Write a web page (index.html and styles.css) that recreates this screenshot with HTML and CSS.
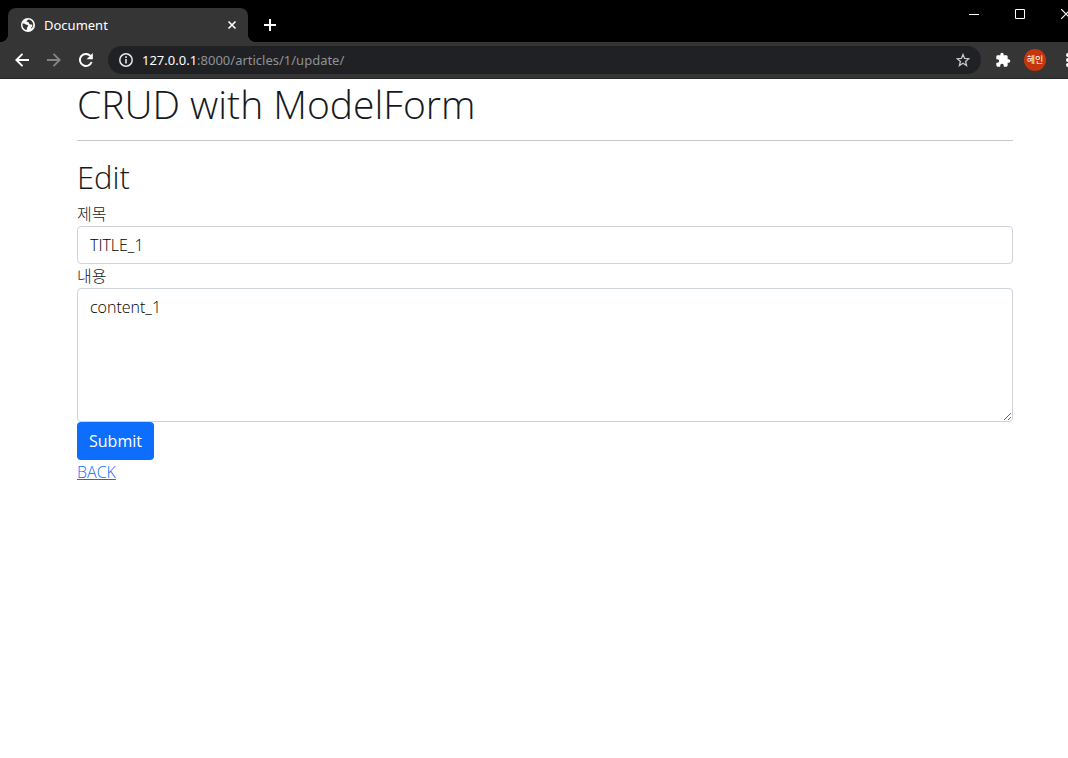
FILE: index.html
```html
<!DOCTYPE html>
<html lang="ko">
<head>
<meta charset="utf-8">
<title>Document</title>
<link rel="stylesheet" href="styles.css">
</head>
<body>
<header class="browser">
  <div class="tab-strip">
    <div class="tab">
      <svg class="favicon" viewBox="0 0 14 14" aria-hidden="true"><circle cx="7" cy="7" r="7" fill="#fff"/><path d="M1.500 5.500c1.500-.2 2.600.3 3.300 1.100.8.300 1.900.2 2.300 1 .2.900-.7 1.300-1 2-.2.900.2 1.700-.7 2.400C3 11.500 1.200 9 1.500 5.500zM7 1.600c-.2 1-1.500 1-1.500 2 .4.900 1.600.4 2.300.9.500.500.2 1.400.8 1.800.9.300 1.800-.2 2.500.4.600.600.1 1.600-.5 2.400l-.9 1.700c1.800-.9 2.800-2.600 2.500-4.700C11.800 3.500 9.700 1.600 7 1.600z" fill="#353535"/></svg>
      <span class="tab-title">Document</span>
      <button class="icon-button tab-close" aria-label="Close tab"><svg width="10" height="10" viewBox="0 0 10 10"><path d="M1.500 1.500l7 7m0-7l-7 7" stroke="#fff" stroke-width="1.600"/></svg></button>
    </div>
    <button class="icon-button new-tab" aria-label="New tab"><svg width="12" height="12" viewBox="0 0 12 12"><path d="M6 0v12M0 6h12" stroke="#fff" stroke-width="2"/></svg></button>
    <div class="window-controls">
      <button class="icon-button" aria-label="Minimize"><svg width="10" height="10" viewBox="0 0 10 10"><path d="M0 5.500h10" stroke="#fff"/></svg></button>
      <button class="icon-button" aria-label="Maximize"><svg width="10" height="10" viewBox="0 0 10 10"><path d="M.5.5h9v9h-9z" fill="none" stroke="#fff"/></svg></button>
      <button class="icon-button" aria-label="Close"><svg width="10" height="10" viewBox="0 0 10 10"><path d="M0 0l10 10M10 0L0 10" stroke="#fff" stroke-width="1.200"/></svg></button>
    </div>
  </div>
  <div class="toolbar">
    <button class="icon-button nav" aria-label="Back"><svg width="14" height="14" viewBox="0 0 14 14"><path d="M14 7H1.500M7.500.8L1.300 7l6.200 6.200" fill="none" stroke="#fff" stroke-width="1.900"/></svg></button>
    <button class="icon-button nav" aria-label="Forward"><svg width="14" height="14" viewBox="0 0 14 14"><path d="M0 7h12.500M6.500.8L12.700 7l-6.200 6.200" fill="none" stroke="#858585" stroke-width="1.900"/></svg></button>
    <button class="icon-button nav" aria-label="Reload"><svg width="14" height="14" viewBox="0 0 14 14"><path d="M12.600 9A6 6 0 1 1 11.400 2.900" fill="none" stroke="#fff" stroke-width="2"/><path d="M13.800 0v6.200H7.600z" fill="#fff"/></svg></button>
    <div class="address">
      <svg width="14" height="14" viewBox="0 0 14 14" aria-hidden="true"><circle cx="7" cy="7" r="6.200" fill="none" stroke="#e8e8e8" stroke-width="1.500"/><path d="M7 6v4.500M7 3.300v1.600" stroke="#e8e8e8" stroke-width="1.600"/></svg>
      <span class="url"><span class="host">127.0.0.1</span>:8000/articles/1/update/</span>
      <button class="icon-button" aria-label="Bookmark"><svg width="14" height="14" viewBox="0 0 14 14"><path d="M7 1.500l1.600 3.900 4.200.3-3.200 2.700 1 4.100L7 10.300l-3.600 2.200 1-4.100L1.200 5.700l4.200-.3z" fill="none" stroke="#c8c8c8" stroke-width="1.300"/></svg></button>
    </div>
    <button class="icon-button extensions" aria-label="Extensions"><svg width="16" height="16" viewBox="0 0 24 24"><path d="M20.500 11H19V7c0-1.100-.9-2-2-2h-4V3.500a2.500 2.500 0 0 0-5 0V5H4c-1.100 0-2 .9-2 2v3.800h1.500a2.700 2.700 0 0 1 0 5.400H2V20c0 1.100.9 2 2 2h3.800v-1.500a2.700 2.700 0 0 1 5.400 0V22H17c1.100 0 2-.9 2-2v-4h1.500a2.500 2.500 0 0 0 0-5z" fill="#fff"/></svg></button>
    <button class="avatar">혜인</button>
    <button class="icon-button menu" aria-label="Menu"><svg width="4" height="14" viewBox="0 0 4 14"><circle cx="2" cy="2" r="2" fill="#fff"/><circle cx="2" cy="7" r="2" fill="#fff"/><circle cx="2" cy="12" r="2" fill="#fff"/></svg></button>
  </div>
</header>
<main class="container">
  <h1>CRUD with ModelForm</h1>
  <hr>
  <h2>Edit</h2>
  <form>
    <label for="title">제목</label>
    <input class="field" id="title" type="text" value="TITLE_1">
    <label for="content">내용</label>
    <textarea class="field content" id="content">content_1</textarea>
    <button class="submit" type="button">Submit</button>
  </form>
  <a class="back" href="#">BACK</a>
</main>
</body>
</html>
```
FILE: styles.css
```css
* { box-sizing: border-box; }

body {
  margin: 0;
  background: #fff;
  color: #16191c;
  font: 300 16px/24px "Open Sans", "Noto Sans CJK KR", sans-serif;
  overflow-x: hidden;
}

button { font: inherit; border: 0; padding: 0; }

.browser {
  background: #000;
  overflow: hidden;
}

.icon-button {
  display: flex;
  align-items: center;
  justify-content: center;
  flex: none;
  background: none;
}

.tab-strip {
  display: flex;
  height: 42px;
  padding-left: 8px;
}

.tab {
  position: relative;
  display: flex;
  align-items: center;
  gap: 9px;
  width: 240px;
  margin-top: 8px;
  padding: 0 11px 0 13px;
  background: #353535;
  border-radius: 8px 8px 0 0;
}

.tab::before,
.tab::after {
  content: "";
  position: absolute;
  bottom: 0;
  width: 8px;
  height: 8px;
}

.tab::before {
  right: 100%;
  background: radial-gradient(circle at 0 0, #000 8px, #353535 8px);
}

.tab::after {
  left: 100%;
  background: radial-gradient(circle at 100% 0, #000 8px, #353535 8px);
}

.favicon { width: 14px; height: 14px; }

.tab-title {
  flex: 1;
  color: #fff;
  font: 400 13px/18px "Noto Sans", sans-serif;
}

.new-tab { width: 28px; margin: 8px 0 0 8px; }

.window-controls {
  display: flex;
  height: 28px;
  margin-left: auto;
  margin-right: -21px;
}

.window-controls .icon-button { width: 46px; }

.toolbar {
  display: flex;
  align-items: center;
  height: 37px;
  padding-left: 6px;
  background: #353535;
  border-bottom: 1px solid #252525;
}

.nav { width: 32px; height: 28px; }

.address {
  flex: 1;
  display: flex;
  align-items: center;
  gap: 9px;
  height: 28px;
  margin-left: 6px;
  padding: 0 11px;
  border-radius: 14px;
  background: #202124;
}

.url {
  flex: 1;
  color: #8f9296;
  font: 400 13px/20px "Noto Sans", sans-serif;
}

.host { color: #fff; }

.extensions { margin-left: 14px; }

.avatar {
  width: 22px;
  height: 22px;
  margin-left: 13px;
  border-radius: 50%;
  background: #c5360f;
  color: #fff;
  font: 400 9px/22px "Noto Sans CJK KR", sans-serif;
}

.menu { margin-left: 20px; margin-right: -2px; }

.container { padding: 0 55px 0 77px; }

h1, h2 { margin: 0; font-weight: inherit; }

h1 { font-size: 39px; line-height: 50px; }

hr {
  margin: 11px 0 16px;
  border: 0;
  border-top: 1px solid #c8c9ca;
}

h2 { margin-bottom: 5px; font-size: 31px; line-height: 40px; }

form { display: flex; flex-direction: column; }

.field {
  width: 100%;
  height: 38px;
  padding: 6px 12px;
  border: 1px solid #ced4da;
  border-radius: 4px;
  background: #fff;
  color: #000;
  font: inherit;
}

.content { height: 134px; }

.submit {
  align-self: flex-start;
  padding: 7px 12px;
  border-radius: 4px;
  background: #0d6efd;
  color: #fff;
  font-weight: 400;
}

.back { color: #0d6efd; }
```
